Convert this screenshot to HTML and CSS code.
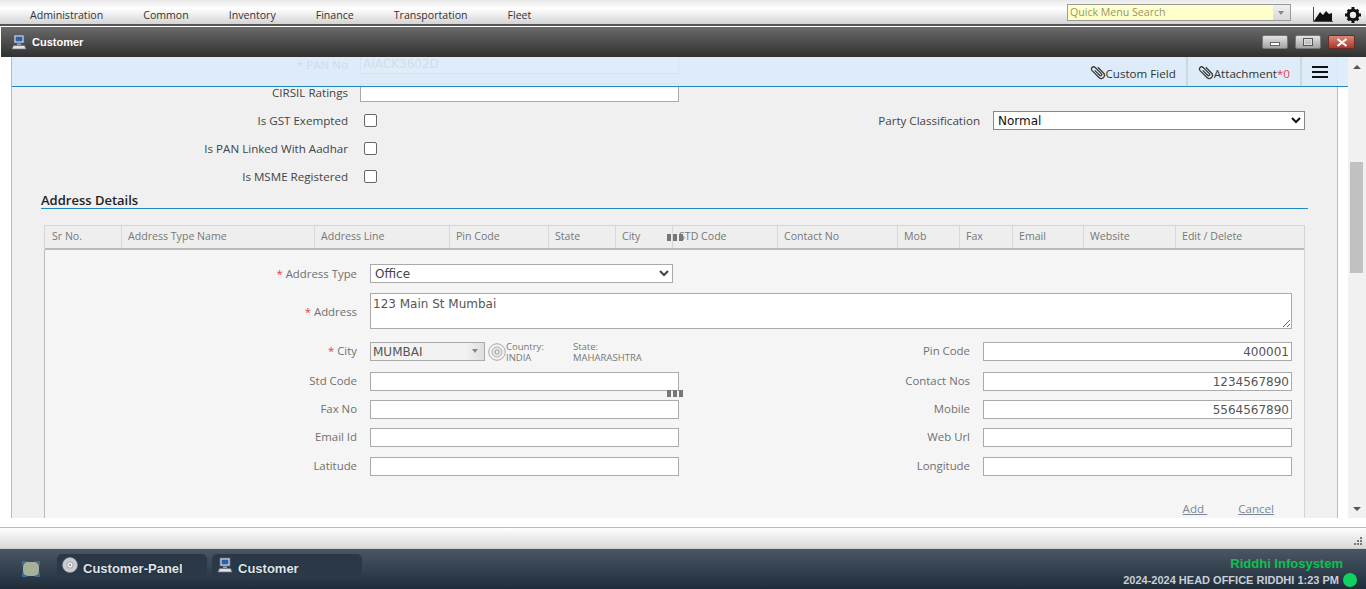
FILE: index.html
```html
<!DOCTYPE html>
<html lang="en">

<head>
  <meta charset="UTF-8">
  <title>Customer</title>
  <link rel="stylesheet" href="styles.css">
</head>

<body>

  <svg class="defs" width="0" height="0">
    <symbol id="pc" viewBox="0 0 16 16">
      <rect x="3" y="1" width="10" height="8" fill="#e8ecf2" stroke="#56606e"/>
      <rect x="4.500" y="2.500" width="7" height="5" fill="#2c5fa8"/>
      <rect x="6" y="9.500" width="4" height="1.500" fill="#9aa2ac"/>
      <path d="M1 15l1.500-3.500h11L15 15z" fill="#dfe3e8" stroke="#6a727c" stroke-width=".7"/>
    </symbol>
    <symbol id="disc" viewBox="0 0 16 16">
      <circle cx="8" cy="8" r="7.500" fill="#c9ccd0" stroke="#8d9196" stroke-width=".6"/>
      <circle cx="8" cy="8" r="3.200" fill="#eceef0" stroke="#8d9196" stroke-width=".8"/>
      <circle cx="8" cy="8" r="1.100" fill="#8d9196"/>
    </symbol>
    <symbol id="ring" viewBox="0 0 18 18">
      <circle cx="9" cy="9" r="8.300" fill="#f2f2f2" stroke="#aaa"/>
      <circle cx="9" cy="9" r="5" fill="#e4e4e4" stroke="#b4b4b4"/>
      <circle cx="9" cy="9" r="2" fill="#f5f5f5" stroke="#999"/>
    </symbol>
    <symbol id="clip" viewBox="0 0 16 16">
      <path transform="rotate(-45 8 8)" d="M11.200 4.500v8a3.200 3.200 0 0 1-6.400 0V2.800a2.200 2.200 0 0 1 4.400 0v8.700a1.200 1.200 0 0 1-2.400 0V4.500" fill="none" stroke="#3a3a3a" stroke-width="1.300"/>
    </symbol>
  </svg>

  <nav class="top-menu">
    <ul class="menu-list">
      <li>Administration</li>
      <li>Common</li>
      <li>Inventory</li>
      <li>Finance</li>
      <li>Transportation</li>
      <li>Fleet</li>
    </ul>
    <div class="quick-search">
      <span class="quick-text">Quick Menu Search</span>
      <span class="quick-arrow"></span>
    </div>
    <svg class="chart-icon" width="20" height="15" viewBox="0 0 20 15">
      <path d="M1 14 7 5l3 3 3-4 3 3 3-1v8z" fill="#111"/>
      <path d="M.5 0v14.500H20" fill="none" stroke="#1c4f86"/>
    </svg>
    <svg class="gear-icon" width="16" height="16" viewBox="0 0 16 16">
      <circle cx="8" cy="8" r="4.700" fill="none" stroke="#111" stroke-width="3"/>
      <path d="M6.500 0h3v3h-3zM6.500 13h3v3h-3zM0 6.500h3v3H0zM13 6.500h3v3h-3zM1.700 3.800 3.800 1.700 5.900 3.800 3.800 5.900zM10.100 12.200l2.100-2.100 2.100 2.100-2.100 2.100zM1.700 12.200l2.100-2.100 2.100 2.100-2.100 2.100zM10.100 3.800l2.100-2.100 2.100 2.100-2.100 2.100z" fill="#111"/>
    </svg>
  </nav>

  <header class="title-bar">
    <svg class="title-icon" width="16" height="16"><use href="#pc"/></svg>
    <span class="title-text">Customer</span>
    <div class="win-buttons">
      <span class="win-btn"><i class="glyph-min"></i></span>
      <span class="win-btn"><i class="glyph-max"></i></span>
      <span class="win-btn win-close">
        <svg width="12" height="9" viewBox="0 0 12 9"><path d="M1.500 1 10.500 8M10.500 1l-9 7" stroke="#fff" stroke-width="2.200"/></svg>
      </span>
    </div>
  </header>

  <div class="window-body">
    <main class="panel">

      <div class="action-bar">
        <a class="action-item">
          <svg width="16" height="16"><use href="#clip"/></svg>Custom Field
        </a>
        <a class="action-item item-line">
          <svg width="16" height="16"><use href="#clip"/></svg>Attachment<span class="red">*0</span>
        </a>
        <a class="action-item item-line burger"><i></i><i></i><i></i></a>
      </div>

      <div class="scroll-content">
        <div class="top-form">
          <label class="lbl dark">* PAN No</label>
          <input class="field wide mono" type="text" value="AIACK3602D">
          <span></span><span></span>

          <label class="lbl dark">CIRSIL Ratings</label>
          <input class="field wide" type="text">
          <span></span><span></span>

          <label class="lbl dark">Is GST Exempted</label>
          <input class="check" type="checkbox">
          <label class="lbl dark">Party Classification</label>
          <select class="party-select"><option>Normal</option></select>

          <label class="lbl dark">Is PAN Linked With Aadhar</label>
          <input class="check" type="checkbox">
          <span></span><span></span>

          <label class="lbl dark">Is MSME Registered</label>
          <input class="check" type="checkbox">
          <span></span><span></span>
        </div>

        <h3 class="section-title"><span>Address Details</span></h3>

        <div class="addr-table">
          <div class="addr-head">
            <div>Sr No.</div>
            <div>Address Type Name</div>
            <div>Address Line</div>
            <div>Pin Code</div>
            <div>State</div>
            <div>City<span class="grip head-grip"><i></i><i></i><i></i></span></div>
            <div class="std-cell">STD Code</div>
            <div>Contact No</div>
            <div>Mob</div>
            <div>Fax</div>
            <div>Email</div>
            <div>Website</div>
            <div>Edit / Delete</div>
          </div>

          <div class="addr-form">
            <div class="row-single">
              <label class="lbl"><span class="red">*</span> Address Type</label>
              <select class="type-select"><option>Office</option></select>
            </div>
            <div class="row-single row-address">
              <label class="lbl"><span class="red">*</span> Address</label>
              <textarea class="address-box">123 Main St Mumbai</textarea>
            </div>

            <div class="row-pair row-city">
              <label class="lbl"><span class="red">*</span> City</label>
              <div class="city-wrap">
                <div class="city-combo">
                  <span>MUMBAI</span>
                  <span class="combo-arrow"></span>
                </div>
                <svg class="city-disc" width="18" height="18"><use href="#ring"/></svg>
                <div class="geo country">Country:<br>INDIA</div>
                <div class="geo">State:<br>MAHARASHTRA</div>
              </div>
              <label class="lbl">Pin Code</label>
              <input class="field num" type="text" value="400001">
            </div>

            <div class="row-pair row-std">
              <label class="lbl">Std Code</label>
              <input class="field" type="text">
              <label class="lbl">Contact Nos</label>
              <input class="field num" type="text" value="1234567890">
            </div>
            <span class="grip body-grip"><i></i><i></i><i></i></span>

            <div class="row-pair">
              <label class="lbl">Fax No</label>
              <input class="field" type="text">
              <label class="lbl">Mobile</label>
              <input class="field num" type="text" value="5564567890">
            </div>

            <div class="row-pair">
              <label class="lbl">Email Id</label>
              <input class="field" type="text">
              <label class="lbl">Web Url</label>
              <input class="field" type="text">
            </div>

            <div class="row-pair row-lat">
              <label class="lbl">Latitude</label>
              <input class="field" type="text">
              <label class="lbl">Longitude</label>
              <input class="field" type="text">
            </div>

            <div class="form-links">
              <a>Add </a>
              <a>Cancel</a>
            </div>
          </div>
        </div>
      </div>
    </main>

    <div class="scrollbar">
      <span class="arrow-up"></span>
      <span class="thumb"></span>
      <span class="arrow-down"></span>
    </div>
  </div>

  <div class="status-strip">
    <svg class="resize-dots" width="8" height="8" viewBox="0 0 8 8" fill="#777">
      <path d="M6 0h2v2H6zM3 3h2v2H3zM6 3h2v2H6zM0 6h2v2H0zM3 6h2v2H3zM6 6h2v2H6z"/>
    </svg>
  </div>

  <footer class="taskbar">
    <svg class="desk-icon" width="18" height="16" viewBox="0 0 18 16">
      <path d="M0 0h6L0 5zM18 0h-6l6 5zM0 16h6l-6-5zM18 16h-6l6-5z" fill="#3e6a9c"/>
      <rect x="1" y="1" width="16" height="14" rx="5" fill="#a5b09a"/>
    </svg>
    <div class="task-tab">
      <svg width="16" height="16"><use href="#disc"/></svg>
      <span>Customer-Panel</span>
    </div>
    <div class="task-tab">
      <svg width="16" height="16"><use href="#pc"/></svg>
      <span>Customer</span>
    </div>
    <div class="task-info">
      <div class="brand">Riddhi Infosystem</div>
      <div class="session">2024-2024 HEAD OFFICE RIDDHI 1:23 PM <i class="online"></i></div>
    </div>
  </footer>

</body>

</html>
```

FILE: styles.css
```css
html, body {
  height: 100%;
}
body {
  margin: 0;
  overflow: hidden;
  display: flex;
  flex-direction: column;
  background-color: #fff;
  font-family: "Open Sans", "Noto Sans", sans-serif;
  font-size: 12px;
  color: #707070;
}
.defs {
  position: absolute;
}

/* top menu */
.top-menu {
  height: 24px;
  flex: none;
  display: flex;
  align-items: center;
  background: linear-gradient(#e8e8e8, #fff 35%, #d4d4d4);
  border-bottom: 2px solid #555;
}
.menu-list {
  display: flex;
  list-style: none;
  margin: 5px 0 0 30px;
  padding: 0;
  gap: 40px;
  color: #333;
  font-size: 10.6px;
  flex: 1;
}
.quick-search {
  width: 222px;
  height: 15px;
  margin: 1px 22px 0 0;
  display: flex;
  border: 1px solid #999;
  background-color: #ffffcc;
}
.quick-text {
  flex: 1;
  padding-left: 2px;
  color: #99986a;
  font-size: 10.6px;
  line-height: 15px;
}
.quick-arrow {
  width: 17px;
  background: linear-gradient(#f0f0f0, #d8d8d8);
  position: relative;
}
.quick-arrow::after, .combo-arrow::after {
  content: "";
  position: absolute;
  left: 5px;
  top: 6px;
  border: 3px solid transparent;
  border-top: 4px solid #888;
  border-bottom: 0;
}
.chart-icon {
  margin: 4px 12px 0 0;
}
.gear-icon {
  margin: 5px 5px 0 0;
}

/* window title */
.title-bar {
  height: 30px;
  flex: none;
  display: flex;
  align-items: center;
  margin-left: 1px;
  background: linear-gradient(#6a6a6a, #303030);
  border-top: 1px solid #fff;
}
.title-icon {
  margin-left: 10px;
}
.title-text {
  margin-left: 5px;
  color: #fff;
  font-family: "Liberation Sans", sans-serif;
  font-size: 11px;
  font-weight: bold;
  flex: 1;
}
.win-buttons {
  display: flex;
  gap: 7px;
  margin-right: 11px;
}
.win-btn {
  width: 24px;
  height: 12px;
  display: flex;
  align-items: center;
  justify-content: center;
  background: linear-gradient(#e4e4e4, #a4a4a4);
  border: 1px solid #777;
  border-radius: 2px;
}
.win-close {
  width: 25px;
  background: linear-gradient(#d8887a, #a8382c);
  border-color: #6b2a22;
}
.glyph-min {
  width: 8px;
  height: 2px;
  margin-top: 4px;
  border: 1px solid #666;
  background-color: #fff;
}
.glyph-max {
  width: 8px;
  height: 6px;
  border: 1px solid #555;
  box-shadow: inset 0 0 0 1px #ddd;
}

/* body of the window */
.window-body {
  height: 461px;
  flex: none;
  display: flex;
}
.panel {
  position: relative;
  width: 1325px;
  margin-left: 11px;
  background-color: #f0f0f0;
  border-left: 1px solid #bbb;
  border-right: 1px solid #bbb;
}
.scrollbar {
  width: 18px;
  margin-left: 10px;
  position: relative;
  background-color: #f1f1f1;
}
.thumb {
  position: absolute;
  top: 105px;
  left: 2px;
  width: 13px;
  height: 111px;
  background-color: #c1c1c1;
}
.arrow-up, .arrow-down {
  position: absolute;
  left: 5px;
  border: 4px solid transparent;
}
.arrow-up {
  top: 8px;
  border-bottom: 4px solid #555;
  border-top: 0;
}
.arrow-down {
  bottom: 7px;
  border-top: 4px solid #555;
  border-bottom: 0;
}

.action-bar {
  position: absolute;
  top: 0;
  left: 0;
  width: 1336px;
  height: 29px;
  z-index: 2;
  display: flex;
  justify-content: flex-end;
  align-items: center;
  background-color: rgba(219, 234, 248, .9);
  border-bottom: 1px solid #1f8ac0;
  color: #333;
}
.action-item {
  box-sizing: border-box;
  height: 29px;
  display: flex;
  align-items: center;
  padding: 3px 10px 0;
  font-size: 11.6px;
}
.action-item svg {
  margin-top: -3px;
}
.item-line {
  border-left: 2px solid #ccd8e2;
}
.red {
  color: #e8404a;
}
.burger {
  box-sizing: content-box;
  flex-direction: column;
  justify-content: center;
  gap: 3px;
  width: 16px;
  padding: 0 20px 0 10px;
  align-items: flex-start;
}
.burger i {
  display: block;
  width: 16px;
  height: 2px;
  background-color: #111;
}

/* form */
.scroll-content {
  height: 100%;
  overflow: hidden;
}
.lbl {
  text-align: right;
  white-space: nowrap;
  font-size: 11.4px;
}
.dark {
  color: #444;
  font-size: 11.6px;
}
.field {
  box-sizing: border-box;
  height: 19px;
  padding: 0 2px;
  border: 1px solid #aaa;
  background-color: #fff;
  font-family: "DejaVu Sans", sans-serif;
  font-size: 12px;
  color: #555;
  outline: none;
  border-radius: 0;
}
.num {
  text-align: right;
}
.top-form {
  display: grid;
  grid-template-columns: 336px 319px 290px 312px;
  grid-auto-rows: 28px;
  column-gap: 12px;
  align-items: center;
  margin-top: -7px;
}
.top-form .lbl:nth-child(4n+3) {
  padding-right: 1px;
}
.wide {
  width: 319px;
}
.mono {
  color: #666;
}
.check {
  width: 13px;
  height: 13px;
  margin: 0 0 0 4px;
  appearance: none;
  border: 1px solid #666;
  border-radius: 2px;
  background-color: #fff;
}
.party-select {
  box-sizing: border-box;
  width: 312px;
  height: 19px;
  padding-top: 1px;
  font-family: "DejaVu Sans", sans-serif;
  font-size: 12px;
  color: #111;
  background-color: #fff;
  border: 1px solid #888;
}
.section-title {
  margin: 0 29px 16px 29px;
  height: 18px;
  border-bottom: 1px solid #1f8ac0;
  font-size: 13px;
  font-weight: 600;
  line-height: 20px;
  color: #222;
}

/* address grid */
.addr-table {
  margin: 0 32px 0 32px;
  border: 1px solid #d4d4d4;
  border-bottom: 0;
}
.addr-head {
  display: grid;
  grid-template-columns: 76px 193px 135px 99px 67px 57px 105px 120px 62px 53px 71px 92px 1fr;
  height: 22px;
  border-bottom: 2px solid #bbb;
  background-color: #eee;
  font-size: 10.6px;
  line-height: 21px;
  color: #777;
}
.addr-head > div {
  position: relative;
  padding-left: 6px;
  border-left: 1px solid #d8d8d8;
}
.addr-head > div:first-child {
  padding-left: 7px;
  border-left: 0;
}
.std-cell {
  color: #777;
}
.grip {
  display: flex;
  gap: 2px;
  position: absolute;
}
.grip i {
  flex: none;
  width: 4px;
  height: 7px;
  background-color: #777;
}
.head-grip {
  top: 8px;
  left: 51px;
}
.addr-form {
  position: relative;
  height: 280px;
  padding-top: 14px;
  background-color: #f5f5f5;
  border-left: 1px solid #bbb;
  margin-left: -1px;
}
.row-single {
  display: flex;
  align-items: center;
  gap: 13px;
}
.row-single .lbl {
  width: 312px;
}
.type-select {
  box-sizing: border-box;
  width: 303px;
  height: 19px;
  font-family: "DejaVu Sans", sans-serif;
  font-size: 12px;
  color: #444;
  background-color: #fff;
  border: 1px solid #aaa;
}
.row-address {
  margin-top: 10px;
}
.address-box {
  box-sizing: border-box;
  width: 922px;
  height: 36px;
  padding: 3px 2px 2px;
  border: 1px solid #aaa;
  border-radius: 0;
  font-family: "DejaVu Sans", sans-serif;
  font-size: 12px;
  color: #555;
}
.row-pair {
  display: grid;
  grid-template-columns: 312px 309px 278px 309px;
  column-gap: 13px;
  align-items: center;
  height: 19px;
  margin-top: 9px;
}
.row-pair .lbl {
  margin-top: -2px;
}
.row-city {
  margin-top: 13px;
}
.row-std {
  margin-top: 11px;
}
.row-lat {
  margin-top: 10px;
}
.city-wrap {
  display: flex;
  align-items: center;
  height: 19px;
}
.city-combo {
  box-sizing: border-box;
  width: 115px;
  height: 19px;
  display: flex;
  justify-content: space-between;
  align-items: center;
  padding-left: 2px;
  border: 1px solid #aaa;
  background-color: #f2f2f2;
  font-family: "DejaVu Sans", sans-serif;
  font-size: 12px;
  color: #555;
}
.combo-arrow {
  position: relative;
  width: 17px;
  height: 17px;
  background: linear-gradient(90deg, #f0f0f0, #dedede);
}
.city-disc {
  flex: none;
  margin-left: 3px;
}
.geo {
  font-size: 9.500px;
  line-height: 11px;
  color: #777;
}
.country {
  width: 67px;
}
.body-grip {
  position: relative;
  left: 622px;
  top: -1px;
  height: 0;
}
.form-links {
  display: flex;
  justify-content: flex-end;
  gap: 31px;
  margin: 25px 30px 0 0;
  font-size: 11.6px;
  color: #7b8794;
  text-decoration: underline;
  white-space: pre;
}

/* bottom */
.status-strip {
  position: relative;
  height: 20px;
  flex: none;
  margin-top: 9px;
  background: linear-gradient(#fff, #d8d8d8);
  border-top: 1px solid #bbb;
}
.resize-dots {
  position: absolute;
  right: 4px;
  bottom: 3px;
}
.taskbar {
  flex: 1;
  display: flex;
  align-items: flex-start;
  background: linear-gradient(#4a5663, #1f2d3b);
  border-top: 1px solid #ccc;
  color: #dfe5ea;
  font-family: "Liberation Sans", sans-serif;
}
.desk-icon {
  flex: none;
  margin: 12px 17px 0 22px;
}
.task-tab {
  box-sizing: border-box;
  width: 150px;
  height: 25px;
  margin: 5px 5px 0 0;
  display: flex;
  align-items: center;
  gap: 5px;
  padding-left: 5px;
  background: linear-gradient(#293746, #2b3a49);
  border-radius: 5px 5px 0 0;
  font-size: 13px;
  font-weight: bold;
  text-shadow: 0 0 2px rgba(0, 0, 0, .6);
}
.task-tab svg {
  margin-top: -4px;
}
.task-tab span {
  margin-top: 4px;
}
.task-info {
  margin-left: auto;
  padding: 7px 9px 0 0;
  text-align: right;
}
.brand {
  margin-right: 14px;
  color: #0fc050;
  font-size: 13px;
  font-weight: bold;
}
.session {
  display: flex;
  align-items: center;
  gap: 4px;
  margin-top: 2px;
  font-size: 11px;
  font-weight: bold;
  color: #c8cfd6;
}
.online {
  width: 14px;
  height: 14px;
  border-radius: 50%;
  background-color: #0fd060;
}
```
